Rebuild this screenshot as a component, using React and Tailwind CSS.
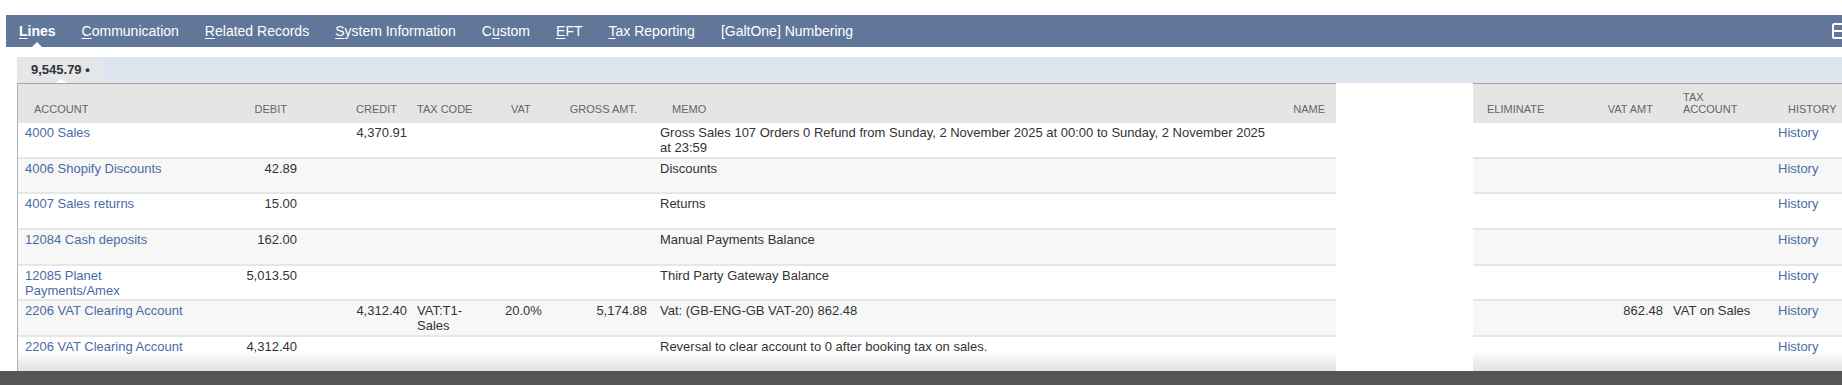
import React from 'react';

const tabs = [
  { pre: '', u: 'L', post: 'ines', active: true },
  { pre: '', u: 'C', post: 'ommunication' },
  { pre: '', u: 'R', post: 'elated Records' },
  { pre: '', u: 'S', post: 'ystem Information' },
  { pre: 'C', u: 'u', post: 'stom' },
  { pre: '', u: 'E', post: 'FT' },
  { pre: '', u: 'T', post: 'ax Reporting' },
  { pre: '[GaltOne] Numbering', u: '', post: '' },
];

// fixed column widths, header padding is wider than cell padding
const cols = [
  { key: 'account', label: 'ACCOUNT', w: 'w-[182px]', th: 'pl-[16px]', td: 'pl-[7px] pr-[10px]', link: true },
  { key: 'debit', label: 'DEBIT', w: 'w-[102px]', th: 'pr-[15px] justify-end', td: 'pr-[5px] text-right' },
  { key: 'credit', label: 'CREDIT', w: 'w-[110px]', th: 'pr-[15px] justify-end', td: 'pr-[5px] text-right' },
  { key: 'taxcode', label: 'TAX CODE', w: 'w-[88px]', th: 'pl-[5px]', td: 'pl-[5px] pr-[18px]' },
  { key: 'vat', label: 'VAT', w: 'w-[60px]', th: 'pl-[11px]', td: 'pl-[5px]' },
  { key: 'gross', label: 'GROSS AMT.', w: 'w-[92px]', th: 'pr-[15px] justify-end', td: 'pr-[5px] text-right' },
  { key: 'memo', label: 'MEMO', w: 'w-[625px]', th: 'pl-[20px]', td: 'pl-[8px] pr-[7px]' },
  { key: 'name', label: 'NAME', w: 'w-[59px]', th: 'pr-[11px] justify-end', td: 'pr-[5px]' },
  { key: 'blank', label: '', w: 'w-[137px]', th: '', td: '', blank: true },
  { key: 'elim', label: 'ELIMINATE', w: 'w-[107px]', th: 'pl-[14px]', td: 'pl-[4px]' },
  { key: 'vatamt', label: 'VAT AMT', w: 'w-[88px]', th: 'pr-[15px] justify-end', td: 'pr-[5px] text-right' },
  { key: 'taxacct', label: 'TAX ACCOUNT', w: 'w-[105px]', th: 'pl-[15px]', td: 'pl-[5px]', twoLine: true },
  { key: 'history', label: 'HISTORY', w: 'flex-1', th: 'pl-[15px]', td: 'pl-[5px]', link: true },
];

const rows = [
  { h: 'h-[36px]', bg: 'bg-white', account: '4000 Sales', credit: '4,370.91', memo: 'Gross Sales 107 Orders 0 Refund from Sunday, 2 November 2025 at 00:00 to Sunday, 2 November 2025 at 23:59' },
  { h: 'h-[35px]', bg: 'bg-[#f7f7f7]', account: '4006 Shopify Discounts', debit: '42.89', memo: 'Discounts' },
  { h: 'h-[36px]', bg: 'bg-white', account: '4007 Sales returns', debit: '15.00', memo: 'Returns' },
  { h: 'h-[36px]', bg: 'bg-[#f7f7f7]', account: '12084 Cash deposits', debit: '162.00', memo: 'Manual Payments Balance' },
  { h: 'h-[35px]', bg: 'bg-white', account: '12085 Planet Payments/Amex', debit: '5,013.50', memo: 'Third Party Gateway Balance' },
  {
    h: 'h-[36px]', bg: 'bg-[#f7f7f7]', account: '2206 VAT Clearing Account', credit: '4,312.40', taxcode: 'VAT:T1-Sales',
    vat: '20.0%', gross: '5,174.88', memo: 'Vat: (GB-ENG-GB VAT-20) 862.48', vatamt: '862.48', taxacct: 'VAT on Sales',
  },
  { h: 'h-[36px]', bg: 'bg-linear-to-b from-white from-40% to-[#e2e2e2]', account: '2206 VAT Clearing Account', debit: '4,312.40', memo: 'Reversal to clear account to 0 after booking tax on sales.' },
];

function TabBar() {
  return (
    <div className="ml-[6px] h-[32px] bg-[#607799] flex items-center justify-between">
      <div className="flex items-center h-full">
        {tabs.map((t, i) => (
          <div
            key={i}
            className={`relative h-full flex items-center px-[13px] text-[14px] text-white ${t.active ? 'font-bold' : ''}`}
          >
            <span>
              {t.pre}
              {t.u && <span className="underline underline-offset-2">{t.u}</span>}
              {t.post}
            </span>
            {t.active && (
              <span className="absolute bottom-0 left-1/2 -translate-x-1/2 w-0 h-0 border-x-[5px] border-x-transparent border-b-[5px] border-b-white" />
            )}
          </div>
        ))}
      </div>
      <div className="w-[10px] h-[16px] overflow-hidden">
        <svg width="16" height="16" viewBox="0 0 16 16" fill="none">
          <rect x="1" y="1" width="14" height="14" rx="1.5" stroke="white" strokeWidth="2" />
          <line x1="1" y1="8" x2="15" y2="8" stroke="white" strokeWidth="2" />
        </svg>
      </div>
    </div>
  );
}

function SubTabs() {
  return (
    <div className="h-[26px] bg-[#dfe5ee] flex">
      <div className="relative h-full flex items-center pl-[14px] pr-[11px] bg-[#e4e6ea] text-[13px] font-bold text-[#333]">
        9,545.79 •
        <span className="absolute bottom-0 left-[38px] w-0 h-0 border-x-[6px] border-x-transparent border-b-[4px] border-b-white" />
      </div>
    </div>
  );
}

function HeaderRow() {
  return (
    <div className="flex h-[38px]">
      {cols.map((c) => (
        <div
          key={c.key}
          className={`${c.w} shrink-0 flex items-end pb-[6px] text-[11px] leading-[12px] text-[#666] whitespace-nowrap ${
            c.blank ? 'bg-white' : 'bg-[#e5e5e5] border-t border-[#a6a6a6]'
          } ${c.th}`}
        >
          {c.twoLine ? (
            <span>
              TAX
              <br />
              ACCOUNT
            </span>
          ) : (
            c.label
          )}
        </div>
      ))}
    </div>
  );
}

function DataRow({ row }) {
  return (
    <div className={`flex ${row.h}`}>
      {cols.map((c) => {
        const value = c.key === 'history' ? 'History' : row[c.key];
        return (
          <div
            key={c.key}
            className={`${c.w} shrink-0 pt-[2px] text-[13px] leading-[15px] ${
              c.blank ? 'bg-white' : `${row.bg} border-t-2 border-[#e6e6e6]`
            } ${c.link ? 'text-[#4a6aa5]' : 'text-[#333]'} ${c.td}`}
          >
            {value}
          </div>
        );
      })}
    </div>
  );
}

export default function App() {
  return (
    <div className="w-[1842px] h-[385px] overflow-hidden bg-white font-['Liberation_Sans',Arial,sans-serif] flex flex-col">
      <div className="pt-[15px]">
        <TabBar />
      </div>
      <div className="ml-[17px] mt-[10px] flex flex-col">
        <SubTabs />
        <div className="border-l border-[#b3b3b3] flex flex-col">
          <HeaderRow />
          {rows.map((r, i) => (
            <DataRow key={i} row={r} />
          ))}
        </div>
      </div>
      <div className="h-[14px] bg-[#555555] shrink-0" />
    </div>
  );
}
